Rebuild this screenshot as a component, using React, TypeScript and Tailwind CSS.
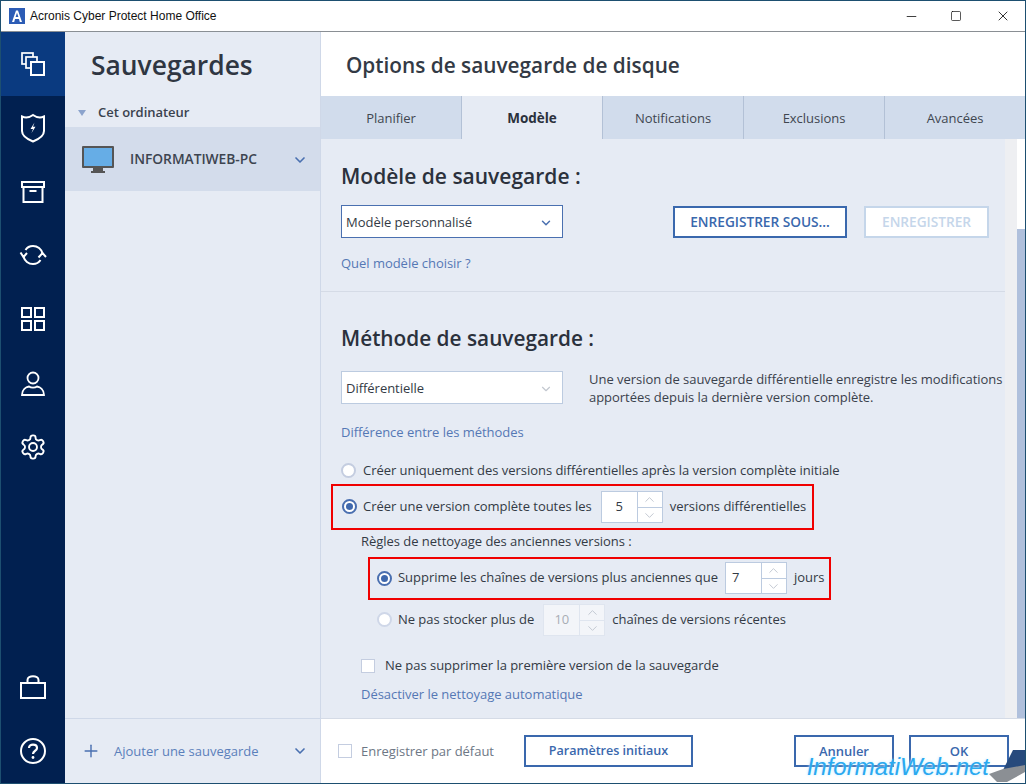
import React from 'react';
import { ChevronDown, ChevronUp, Plus, Minus, Square, X } from 'lucide-react';

const NavIcon: React.FC<{ children: React.ReactNode; active?: boolean; className?: string }> = ({
  children,
  active,
  className = 'h-16',
}) => (
  <div className={`flex items-center justify-center ${className} ${active ? 'bg-[#0a3a80]' : ''}`}>
    <svg width="30" height="30" viewBox="0 0 30 30" fill="none" stroke="white" strokeWidth="2">
      {children}
    </svg>
  </div>
);

const Radio: React.FC<{ checked?: boolean; disabled?: boolean }> = ({ checked, disabled }) => (
  <span
    className={`flex h-[15px] w-[15px] shrink-0 items-center justify-center rounded-full border-2 bg-white ${
      checked ? 'border-[#4a6fb0]' : disabled ? 'border-[#cfd7e8]' : 'border-[#c4cde0]'
    }`}
  >
    {checked && <span className="h-[7px] w-[7px] rounded-full bg-[#3f68ad]" />}
  </span>
);

const Spinner: React.FC<{ value: string; disabled?: boolean; align?: string; className?: string }> = ({
  value,
  disabled,
  align = 'justify-center',
  className = 'ml-[9px]',
}) => (
  <span
    className={`mr-[7px] flex h-[32px] w-[62px] shrink-0 border ${className} ${
      disabled ? 'border-[#dfe5ef] bg-[#f3f5f9] text-[#a8adb5]' : 'border-[#bccbe0] bg-white text-[#333a45]'
    }`}
  >
    <span className={`flex flex-1 items-center ${align}`}>{value}</span>
    <span className={`flex w-[25px] flex-col border-l ${disabled ? 'border-[#dfe5ef]' : 'border-[#bccbe0]'}`}>
      <span className={`flex flex-1 items-center justify-center border-b ${disabled ? 'border-[#dfe5ef]' : 'border-[#bccbe0]'}`}>
        <ChevronUp size={15} strokeWidth={1.5} className="text-[#bfc5cf]" />
      </span>
      <span className="flex flex-1 items-center justify-center">
        <ChevronDown size={15} strokeWidth={1.5} className="text-[#bfc5cf]" />
      </span>
    </span>
  </span>
);

const Tab: React.FC<{ label: string; active?: boolean; last?: boolean }> = ({ label, active, last }) => (
  <div
    className={`flex flex-1 items-center justify-center pt-[2px] ${last ? '' : 'border-r border-[#b3c1d6]'} ${
      active ? 'bg-[#e6ebf4] text-[13.5px] font-bold text-[#2b313c]' : 'text-[#3f4650]'
    }`}
  >
    {label}
  </div>
);

const OutlineButton: React.FC<{ label: string; className?: string }> = ({ label, className = '' }) => (
  <button className={`flex h-[32px] items-center justify-center border-2 border-[#3a68ad] bg-white pt-[1px] font-semibold text-[#3a68ad] ${className}`}>
    {label}
  </button>
);

export default function App() {
  return (
    <div className="relative flex h-[784px] w-[1026px] flex-col overflow-hidden border border-[#1d4f70] bg-white font-['Open_Sans',sans-serif] text-[13px] tracking-[-0.03px] text-[#333a45]">
      {/* title bar */}
      <div className="flex h-[31px] shrink-0 items-center border-b border-[#8a8f94] bg-white">
        <svg width="16" height="16" viewBox="0 0 16 16" className="ml-[8px]">
          <rect width="16" height="16" fill="#2c5cb5" />
          <path d="M3 14 L7 2.5 H9 L13 14 H10.8 L10 11 H6 L5.2 14 Z M6.6 9 H9.4 L8 4.8 Z" fill="white" fillRule="evenodd" />
        </svg>
        <span className="ml-[5px] font-['Liberation_Sans',sans-serif] text-[12px] tracking-normal text-[#111]">Acronis Cyber Protect Home Office</span>
        <div className="ml-auto flex items-center text-black">
          <Minus size={15} strokeWidth={1.2} className="mr-[31px]" />
          <Square size={12} strokeWidth={1.3} className="mr-[33px]" />
          <X size={16} strokeWidth={1.2} className="mr-[14px]" />
        </div>
      </div>

      <div className="flex min-h-0 flex-1">
        {/* icon rail */}
        <nav className="flex w-[64px] shrink-0 flex-col bg-[#012050]">
          <NavIcon active>
            <rect x="4" y="4" width="11" height="11" strokeWidth="1.7" />
            <rect x="8" y="8" width="11" height="11" strokeWidth="1.7" fill="#0a3a80" />
            <rect x="13" y="13" width="13" height="13" fill="#0a3a80" />
          </NavIcon>
          <NavIcon>
            <path d="M4 3.5 C8 5.5 11.5 4.5 15 2 C18.5 4.5 22 5.5 26 3.5 V18 C26 23 20 26.5 15 28.5 C10 26.5 4 23 4 18 Z" />
            <path d="M16.5 9.5 L12.5 16 H15 L13.5 20 L17.5 13.8 H15 Z" fill="white" stroke="none" />
          </NavIcon>
          <NavIcon>
            <path d="M4 5 H26 V10 H4 Z M5.5 10 V25 H24.5 V10 M11.5 14 H18.5" />
          </NavIcon>
          <NavIcon>
            <path d="M24.5 12.5 C23.5 8 19.5 5 15 5 C11.8 5 9 6.5 7.5 9 M5.5 15.5 C6.5 20 10.5 23 15 23 C18.2 23 21 21.5 22.5 19" />
            <path d="M2.5 11.5 L5.5 16 L9 12 M20.5 16.5 L24.5 12 L28 16" />
          </NavIcon>
          <NavIcon>
            <rect x="4" y="3" width="9" height="9" />
            <rect x="17" y="3" width="9" height="9" />
            <rect x="4" y="16" width="9" height="9" />
            <rect x="17" y="16" width="9" height="9" />
          </NavIcon>
          <NavIcon>
            <circle cx="15" cy="9" r="5.5" strokeWidth="1.8" />
            <path d="M4 26 C4 20.5 8 18 11 17.5 C13 19 17 19 19 17.5 C22 18 26 20.5 26 26 Z" strokeWidth="1.8" />
          </NavIcon>
          <NavIcon>
            <g transform="translate(1 0) scale(1.167)" strokeWidth="1.6" strokeLinejoin="round">
              <path d="M12.22 2h-.44a2 2 0 0 0-2 2v.18a2 2 0 0 1-1 1.73l-.43.25a2 2 0 0 1-2 0l-.15-.08a2 2 0 0 0-2.73.73l-.22.38a2 2 0 0 0 .73 2.73l.15.1a2 2 0 0 1 1 1.72v.51a2 2 0 0 1-1 1.74l-.15.09a2 2 0 0 0-.73 2.73l.22.38a2 2 0 0 0 2.73.73l.15-.08a2 2 0 0 1 2 0l.43.25a2 2 0 0 1 1 1.73V20a2 2 0 0 0 2 2h.44a2 2 0 0 0 2-2v-.18a2 2 0 0 1 1-1.73l.43-.25a2 2 0 0 1 2 0l.15.08a2 2 0 0 0 2.73-.73l.22-.39a2 2 0 0 0-.73-2.73l-.15-.08a2 2 0 0 1-1-1.74v-.5a2 2 0 0 1 1-1.74l.15-.09a2 2 0 0 0 .73-2.73l-.22-.38a2 2 0 0 0-2.73-.73l-.15.08a2 2 0 0 1-2 0l-.43-.25a2 2 0 0 1-1-1.73V4a2 2 0 0 0-2-2z" />
              <circle cx="12" cy="12" r="3.4" />
            </g>
          </NavIcon>
          <div className="mt-auto" />
          <NavIcon className="h-[64px]">
            <rect x="3" y="11" width="24" height="15" />
            <path d="M9.5 11 V8 C9.5 3 20.5 3 20.5 8 V11" />
          </NavIcon>
          <NavIcon className="h-[64px]">
            <circle cx="15" cy="15" r="12" />
            <path d="M11 12 C11 7.5 19 7.5 19 12 C19 15 15 14.5 15 18" strokeWidth="2.2" />
            <circle cx="15" cy="21.5" r="1.4" fill="white" stroke="none" />
          </NavIcon>
        </nav>

        {/* backups panel */}
        <aside className="flex w-[256px] shrink-0 flex-col border-r border-[#cfd8e8] bg-[#e6ebf4]">
          <h1 className="pl-[26px] pt-[15px] text-[26.4px] leading-[36px] font-semibold tracking-normal text-[#2f3642]">Sauvegardes</h1>
          <div className="mt-[16px] flex h-[28px] items-center pb-[1px] pl-[13px] font-semibold text-[#3a424e]">
            <span className="h-0 w-0 border-x-[4.5px] border-t-[6px] border-x-transparent border-t-[#8ba3cc]" />
            <span className="ml-[12px]">Cet ordinateur</span>
          </div>
          <div className="flex h-[64px] items-center bg-[#d3dceb] pl-[17px] pt-[1px]">
            <svg width="32" height="28" viewBox="0 0 32 28">
              <rect x="0" y="0" width="32" height="22" rx="1" fill="#555" />
              <rect x="2" y="2" width="28" height="18" fill="#66ade6" />
              <rect x="11" y="22" width="10" height="3" fill="#555" />
              <rect x="9" y="25" width="14" height="2" fill="#555" />
            </svg>
            <span className="ml-[16px] text-[13.8px] font-semibold text-[#3d4450]">INFORMATIWEB-PC</span>
            <ChevronDown size={16} strokeWidth={2.5} className="ml-auto mr-[12px] text-[#4a70b0]" />
          </div>
          <div className="mt-auto flex h-[65px] items-center border-t border-[#cfd8e8] pl-[16px] text-[#4a70b0]">
            <Plus size={20} strokeWidth={1.7} />
            <span className="ml-[13px] pt-[1px] tracking-normal text-[#5a7fbb]">Ajouter une sauvegarde</span>
            <ChevronDown size={16} strokeWidth={2.5} className="ml-auto mr-[12px]" />
          </div>
        </aside>

        {/* main */}
        <main className="flex min-w-0 flex-1 flex-col">
          <div className="flex h-[64px] shrink-0 items-center pl-[25px] pt-[3px] text-[20.8px] font-semibold tracking-normal text-[#333a45]">
            Options de sauvegarde de disque
          </div>
          <div className="flex h-[43px] shrink-0 bg-[#d1dcec]">
            <Tab label="Planifier" />
            <Tab label="Modèle" active />
            <Tab label="Notifications" />
            <Tab label="Exclusions" />
            <Tab label="Avancées" last />
          </div>

          <div className="flex min-h-0 flex-1 bg-[#e6ebf4]">
            <div className="min-w-0 flex-1">
              <div className="h-[153px] border-b border-[#d5dbe6] pl-[20px]">
                <h2 className="pt-[22px] text-[21px] leading-[30px] font-semibold tracking-normal text-[#2b313c]">Modèle de sauvegarde :</h2>
                <div className="mt-[14px] flex items-center">
                  <div className="flex h-[33px] w-[222px] items-center justify-between border border-[#4a70b0] bg-white pl-[4px] pr-[9px] pt-[2px]">
                    Modèle personnalisé
                    <ChevronDown size={14} strokeWidth={2.5} className="text-[#4a70b0]" />
                  </div>
                  <OutlineButton label="ENREGISTRER SOUS..." className="ml-[110px] w-[174px] text-[13.7px]" />
                  <button className="ml-[17px] flex h-[32px] w-[125px] items-center justify-center border-2 border-[#c5d6ea] bg-white pt-[1px] text-[13.7px] font-semibold text-[#c5d6ea]">
                    ENREGISTRER
                  </button>
                </div>
                <div className="mt-[16px] text-[#5578b5]">Quel modèle choisir ?</div>
              </div>

              <div className="pl-[20px]">
                <h2 className="pt-[31px] text-[20.8px] leading-[30px] font-semibold tracking-normal text-[#2b313c]">Méthode de sauvegarde :</h2>
                <div className="mt-[18px] flex">
                  <div className="flex h-[33px] w-[222px] shrink-0 items-center justify-between border border-[#bccbe0] bg-white pl-[4px] pr-[9px] pt-[2px]">
                    Différentielle
                    <ChevronDown size={14} strokeWidth={2} className="text-[#c3c8d0]" />
                  </div>
                  <p className="ml-[26px] mt-[-1px] whitespace-nowrap leading-[18px] text-[#3a414c]">
                    Une version de sauvegarde différentielle enregistre les modifications
                    <br />
                    apportées depuis la dernière version complète.
                  </p>
                </div>
                <div className="mt-[17px] text-[#5578b5]">Différence entre les méthodes</div>

                <div className="mt-[18px] flex h-[20px] items-center gap-[7px] whitespace-nowrap">
                  <Radio />
                  Créer uniquement des versions différentielles après la version complète initiale
                </div>
                <div className="ml-[-10px] mt-[3px] flex h-[46px] w-[483px] items-center whitespace-nowrap border-2 border-[#f00000] pl-[9px]">
                  <Radio checked />
                  <span className="ml-[6px]">Créer une version complète toutes les</span>
                  <Spinner value="5" />
                  versions différentielles
                </div>
                <div className="ml-[20px] mt-[1px] h-[20px] leading-[20px]">Règles de nettoyage des anciennes versions :</div>
                <div className="ml-[27px] mt-[6px] flex h-[43px] w-[463px] items-center whitespace-nowrap border-2 border-[#f00000] pl-[7px]">
                  <Radio checked />
                  <span className="ml-[6px]">Supprime les chaînes de versions plus anciennes que</span>
                  <Spinner value="7" align="justify-start pl-[6px]" className="ml-[7px]" />
                  jours
                </div>
                <div className="ml-[36px] mt-[4px] flex h-[32px] items-center whitespace-nowrap">
                  <Radio disabled />
                  <span className="ml-[6px]">Ne pas stocker plus de</span>
                  <Spinner value="10" disabled />
                  chaînes de versions récentes
                </div>
                <div className="ml-[20px] mt-[20px] flex h-[20px] items-center">
                  <span className="h-[14px] w-[14px] border border-[#c4cde0] bg-white" />
                  <span className="ml-[10px]">Ne pas supprimer la première version de la sauvegarde</span>
                </div>
                <div className="ml-[20px] mt-[9px] text-[#5578b5]">Désactiver le nettoyage automatique</div>
              </div>
            </div>
            <div className="w-[12px] shrink-0 bg-[#eeeff2]" />
            <div className="flex w-[8px] shrink-0 flex-col bg-white">
              <div className="h-[90px]" />
              <div className="flex-1 bg-[#b0c0dc]" />
            </div>
          </div>

          {/* footer */}
          <div className="flex h-[65px] shrink-0 items-center border-t border-[#d5dbe6] bg-white pl-[17px]">
            <span className="h-[14px] w-[14px] border border-[#c4cde0]" />
            <span className="ml-[9px] pt-[1px] text-[#6d7785]">Enregistrer par défaut</span>
            <OutlineButton label="Paramètres initiaux" className="ml-[30px] w-[169px] text-[12.6px]" />
            <OutlineButton label="Annuler" className="ml-auto w-[100px]" />
            <OutlineButton label="OK" className="ml-[15px] mr-[16px] w-[100px]" />
          </div>
        </main>
      </div>

      {/* watermark */}
      <div className="absolute bottom-[1px] right-[36px] font-['Liberation_Sans',sans-serif] text-[24px] leading-[30px] italic tracking-normal text-[#2aa9f0] [text-shadow:0_0_3px_#bdeaff]">
        InformatiWeb.net
      </div>
      <svg width="36" height="32" viewBox="0 0 36 32" className="absolute bottom-[1px] right-0">
        <path d="M14 20 L24 0 H36 V16 Z" fill="#274a7c" />
        <path d="M0 24 L14 19 L36 15 V22 L18 32 H8 Z" fill="#8b8f94" />
      </svg>
    </div>
  );
}
